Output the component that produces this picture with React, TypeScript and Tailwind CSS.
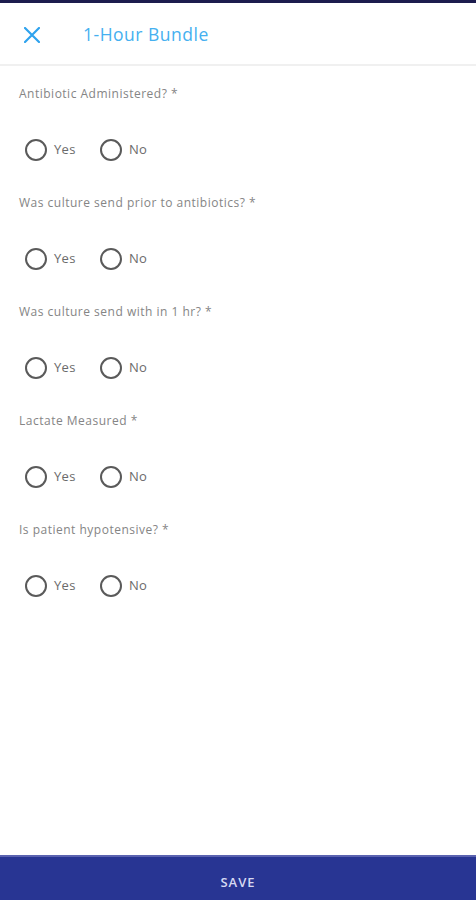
import { useState } from "react";

const questions = [
  "Antibiotic Administered? *",
  "Was culture send prior to antibiotics? *",
  "Was culture send with in 1 hr? *",
  "Lactate Measured *",
  "Is patient hypotensive? *",
];

function Radio({ label, checked, onClick }: { label: string; checked: boolean; onClick: () => void }) {
  return (
    <button type="button" onClick={onClick} className="flex items-center gap-[7px]">
      <span className="flex h-[22px] w-[22px] items-center justify-center rounded-full border-2 border-[#5a5a5a]">
        {checked && <span className="h-[10px] w-[10px] rounded-full bg-[#283593]" />}
      </span>
      <span className="w-[30px] text-left text-[13px] tracking-[0.3px] text-[#6b6b6b]">{label}</span>
    </button>
  );
}

export default function App() {
  const [answers, setAnswers] = useState<Record<number, string>>({});

  return (
    <div className="flex h-[900px] flex-col bg-white font-['Open_Sans',sans-serif]">
      {/* status strip */}
      <div className="h-[3px] bg-[#1c1c4e]" />

      {/* Header */}
      <div className="flex h-[63px] items-center border-b-2 border-[#f0f0f0] pl-[24px]">
        <svg width="16" height="16" viewBox="0 0 16 16" className="mt-[2px]">
          <path d="M1 1 L15 15 M15 1 L1 15" stroke="#2fa3ee" strokeWidth="2.2" strokeLinecap="round" />
        </svg>
        <h1 className="mt-[2px] ml-[43px] text-[17.5px] tracking-[0.5px] text-[#45b0f0]">1-Hour Bundle</h1>
      </div>

      {/* Form */}
      <div className="flex-1 px-[19px] pt-[20px]">
        {questions.map((q, i) => (
          <div key={i} className="h-[109px]">
            <p className="text-[12px] leading-[16px] tracking-[0.5px] text-[#858585]">{q}</p>
            <div className="mt-[37px] flex gap-[16px] pl-[6px]">
              <Radio label="Yes" checked={answers[i] === "yes"} onClick={() => setAnswers({ ...answers, [i]: "yes" })} />
              <Radio label="No" checked={answers[i] === "no"} onClick={() => setAnswers({ ...answers, [i]: "no" })} />
            </div>
          </div>
        ))}
      </div>

      {/* Save */}
      <button
        type="button"
        className="h-[45px] w-full border-t-2 border-[#5b63b0] bg-[#283593] pt-[9px] text-[13px] font-semibold tracking-[1px] text-[#d6d9f2]"
      >
        SAVE
      </button>
    </div>
  );
}
